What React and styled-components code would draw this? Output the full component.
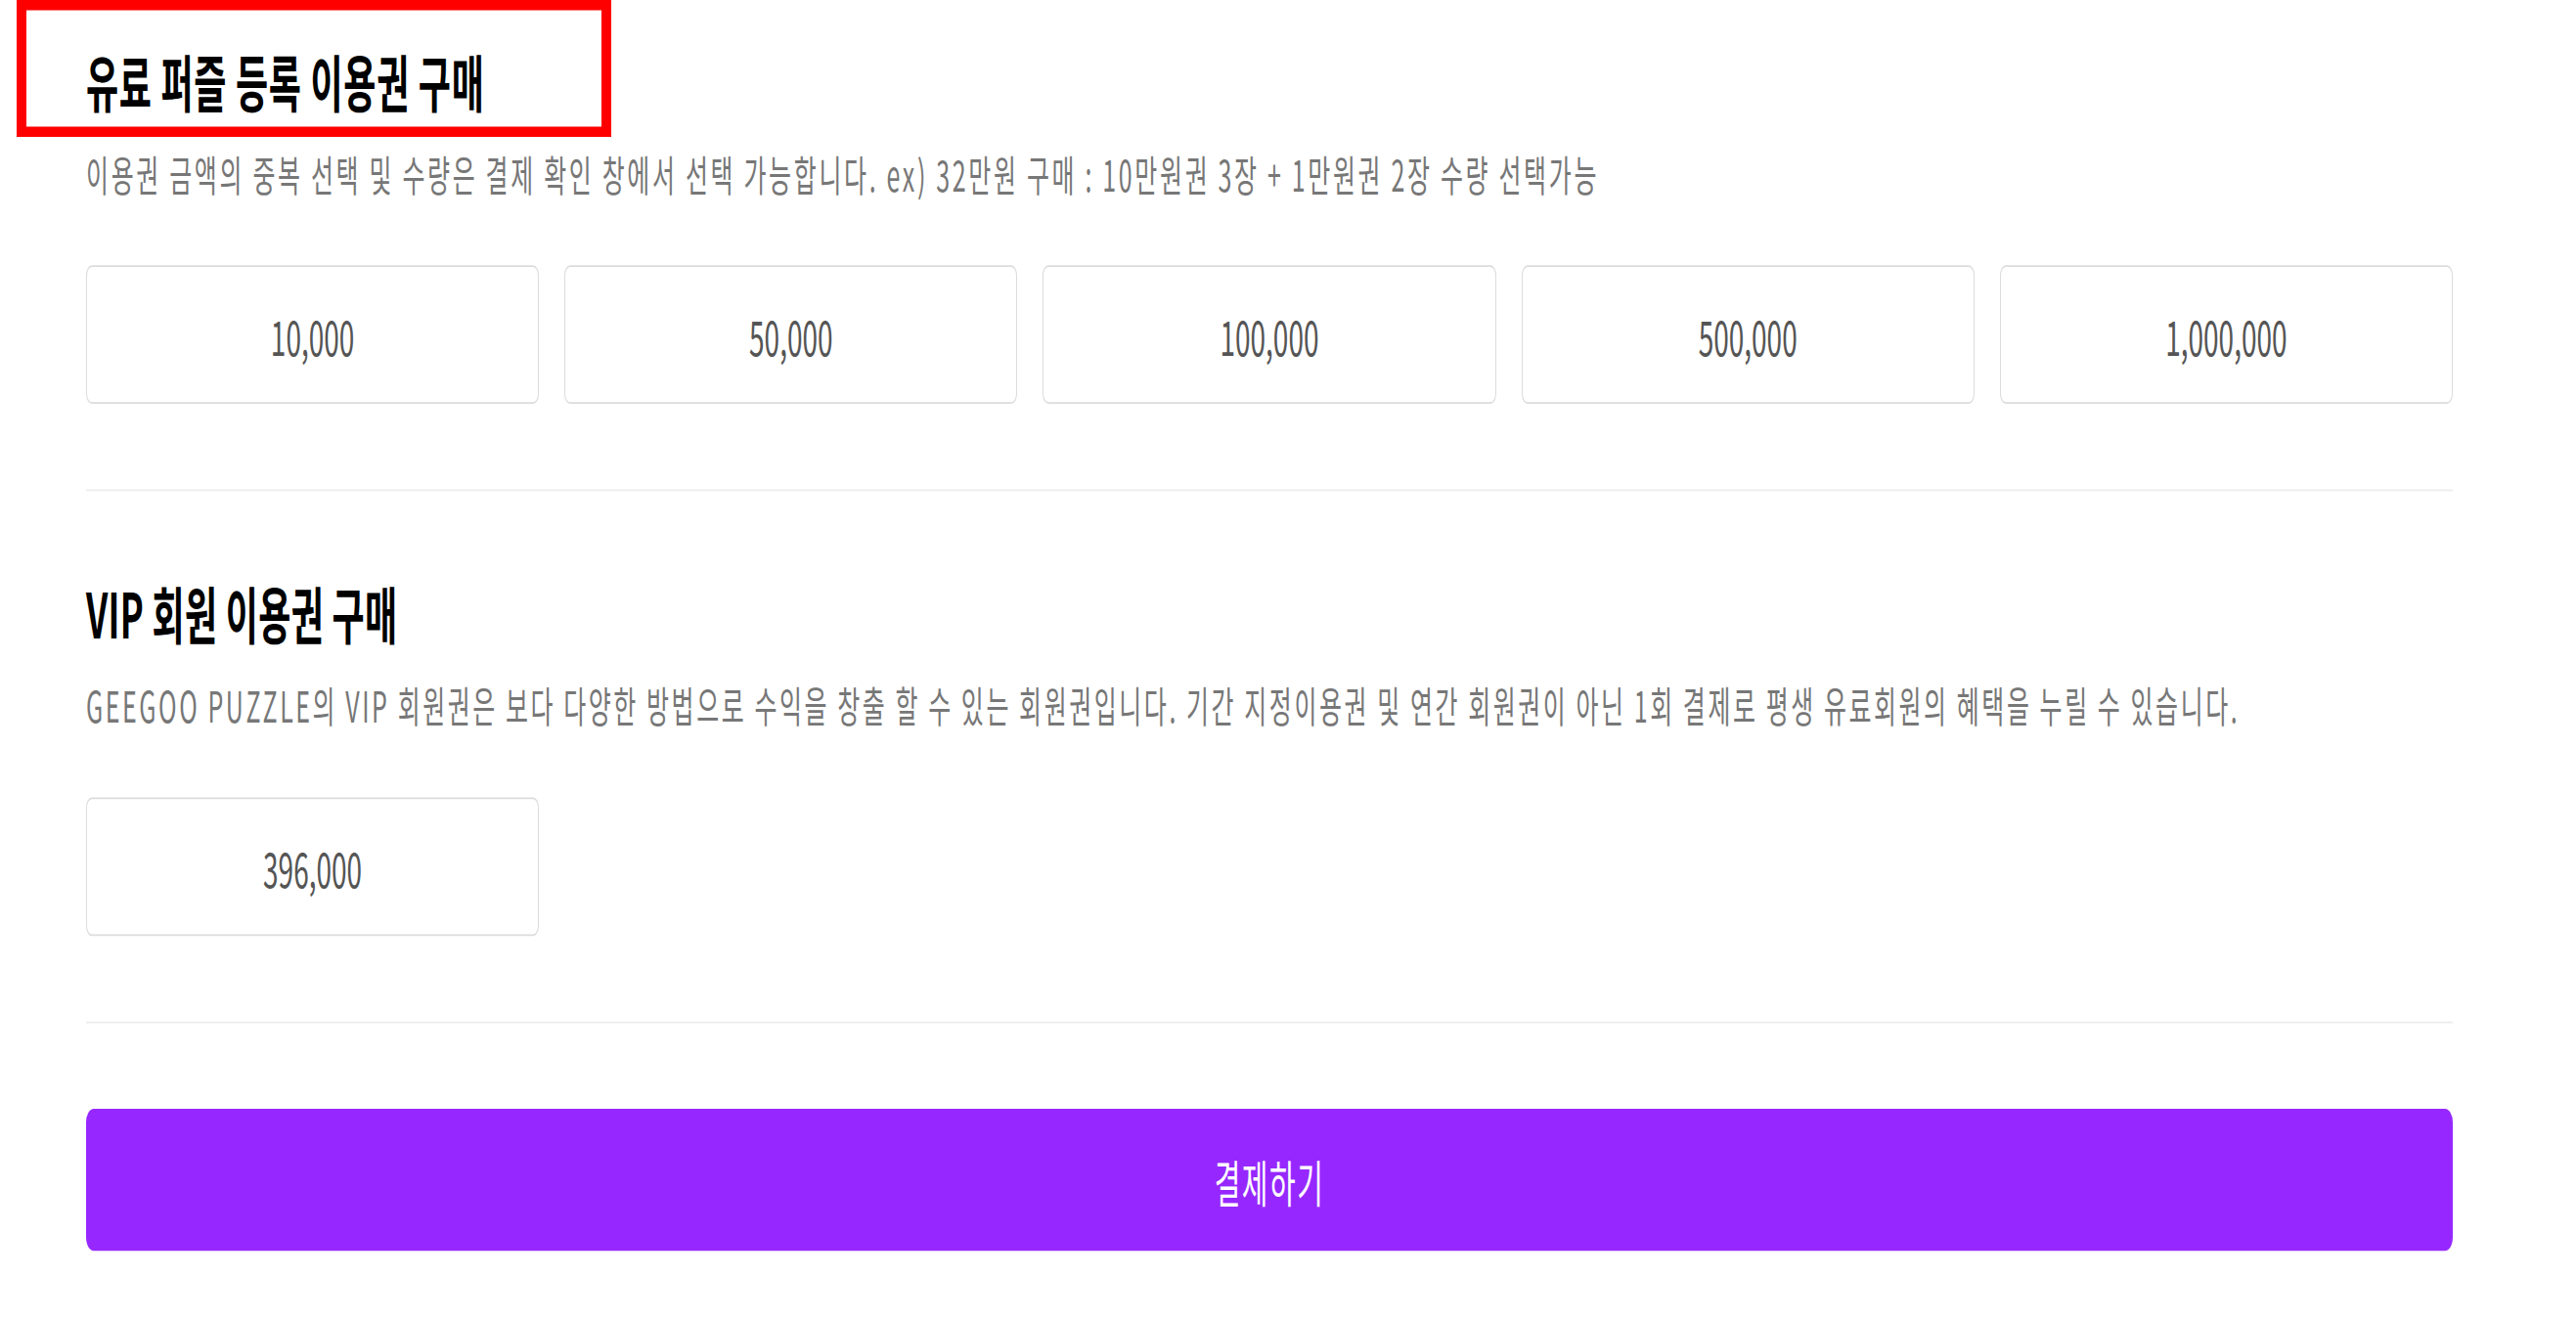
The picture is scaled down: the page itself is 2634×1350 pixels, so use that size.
import React from 'react';
import styled, { createGlobalStyle } from 'styled-components';

// the captured page is stretched vertically, so the whole sheet is scaled on Y
const STRETCH = 1.75;

const GlobalStyle = createGlobalStyle`
  *, *::before, *::after {
    box-sizing: border-box;
  }

  html, body {
    margin: 0;
    padding: 0;
    background: #ffffff;
  }

  body {
    font-family: 'Noto Sans CJK KR', 'Noto Sans', sans-serif;
  }
`;

const Frame = styled.div`
  width: 2634px;
  height: 1350px;
  overflow: hidden;
`;

const Page = styled.main`
  position: relative;
  width: 2634px;
  padding: 28px 126px 0 88px;
  transform: scaleY(${STRETCH});
  transform-origin: top left;
`;

const Highlight = styled.div`
  position: absolute;
  left: 17px;
  top: 0;
  width: 608px;
  height: 80px;
  border: solid #ff0000;
  border-width: 6px 10px;
  pointer-events: none;
`;

const Section = styled.section`
  display: flex;
  flex-direction: column;
`;

const Title = styled.h2`
  margin: ${({ first }) => (first ? '0' : '52px 0 0')};
  font-size: 36px;
  line-height: 36px;
  font-weight: 700;
  letter-spacing: ${({ first }) => (first ? '0.7px' : '0.3px')};
  color: #000000;
`;

const Desc = styled.p`
  margin: ${({ tight }) => (tight ? '24px 0 0' : '25px 0 0')};
  font-size: 25px;
  line-height: 25px;
  font-weight: 400;
  letter-spacing: ${({ spacing }) => spacing}px;
  color: #777777;
`;

const Options = styled.div`
  display: grid;
  grid-template-columns: repeat(5, 1fr);
  gap: 26px;
  margin-top: ${({ top }) => top}px;
`;

const Option = styled.button`
  display: flex;
  align-items: center;
  justify-content: center;
  height: 81px;
  padding: 0;
  border: 1px solid #dcdcdc;
  border-radius: 6px;
  background: #ffffff;
  font-family: inherit;
  font-size: 28px;
  font-weight: 400;
  color: #555555;
  cursor: pointer;
`;

const Divider = styled.hr`
  height: 0;
  margin: 50px 0 0;
  border: 0;
  border-top: 1px solid #ececec;
`;

const PayButton = styled.button`
  width: 100%;
  height: 83px;
  margin-top: 50px;
  padding: 0;
  border: 0;
  border-radius: 8px;
  background: #9628ff;
  font-family: inherit;
  font-size: 29px;
  font-weight: 400;
  letter-spacing: 1.5px;
  color: #ffffff;
  cursor: pointer;
`;

const tickets = ['10,000', '50,000', '100,000', '500,000', '1,000,000'];

const App = () => {
  return (
    <Frame>
      <GlobalStyle />
      <Page>
        <Highlight />
        <Section>
          <Title first>유료 퍼즐 등록 이용권 구매</Title>
          <Desc spacing={2.65}>
            이용권 금액의 중복 선택 및 수량은 결제 확인 창에서 선택 가능합니다. ex) 32만원 구매 : 10만원권 3장 + 1만원권 2장 수량 선택가능
          </Desc>
          <Options top={41}>
            {tickets.map((price) => (
              <Option key={price}>{price}</Option>
            ))}
          </Options>
        </Section>
        <Divider />
        <Section>
          <Title>VIP 회원 이용권 구매</Title>
          <Desc tight spacing={2.55}>
            GEEGOO PUZZLE의 VIP 회원권은 보다 다양한 방법으로 수익을 창출 할 수 있는 회원권입니다. 기간 지정이용권 및 연간 회원권이 아닌 1회 결제로 평생 유료회원의 혜택을 누릴 수 있습니다.
          </Desc>
          <Options top={42}>
            <Option>396,000</Option>
          </Options>
        </Section>
        <Divider />
        <PayButton>결제하기</PayButton>
      </Page>
    </Frame>
  );
};

export default App;
